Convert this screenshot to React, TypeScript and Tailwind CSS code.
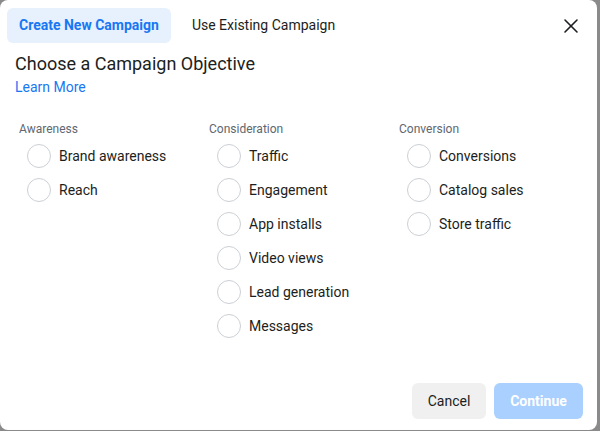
import { X } from 'lucide-react';

const columns = [
  { title: 'Awareness', items: ['Brand awareness', 'Reach'] },
  {
    title: 'Consideration',
    items: ['Traffic', 'Engagement', 'App installs', 'Video views', 'Lead generation', 'Messages'],
  },
  { title: 'Conversion', items: ['Conversions', 'Catalog sales', 'Store traffic'] },
];

export default function App() {
  return (
    <div className="w-[600px] h-[431px] bg-[#8a8a8a] font-['Roboto',sans-serif]">
      <div className="w-[597px] h-[430px] bg-white rounded-lg flex flex-col text-[#1c1e21]">
        <div className="flex items-center pl-[7px] pt-[8px] pr-[14px]">
          <button className="h-[35px] px-[12px] rounded-md bg-[#e7f0fd] text-[#1877f2] text-[14px] font-bold">
            Create New Campaign
          </button>
          <button className="h-[35px] ml-[9px] px-[12px] text-[14px]">Use Existing Campaign</button>
          <X className="ml-auto w-[24px] h-[24px] text-[#1c1e21]" strokeWidth={1.6} />
        </div>
        <div className="px-[15px] pt-[10px]">
          <h1 className="text-[18px] leading-[22px]">Choose a Campaign Objective</h1>
          <a className="block text-[14px] leading-[20px] mt-[2px] text-[#1877f2]">Learn More</a>
        </div>
        <div className="grid grid-cols-[190px_190px_190px] pl-[19px] pt-[24px]">
          {columns.map((col) => (
            <div key={col.title}>
              <div className="text-[12px] leading-[16px] text-[#606770]">{col.title}</div>
              <div className="flex flex-col gap-[10px] pt-[7px] pl-[8px]">
                {col.items.map((item) => (
                  <label key={item} className="flex items-center gap-[8px]">
                    <span className="w-[24px] h-[24px] rounded-full border border-[#ccd0d5] bg-white" />
                    <span className="text-[14px]">{item}</span>
                  </label>
                ))}
              </div>
            </div>
          ))}
        </div>
        <div className="mt-auto flex justify-end gap-[8px] pr-[14px] pb-[11px]">
          <button className="h-[36px] w-[74px] rounded-md bg-[#f0f0f0] text-[14px]">Cancel</button>
          <button className="h-[36px] w-[89px] rounded-md bg-[#a9d0fe] text-white text-[14px] font-bold">
            Continue
          </button>
        </div>
      </div>
    </div>
  );
}
